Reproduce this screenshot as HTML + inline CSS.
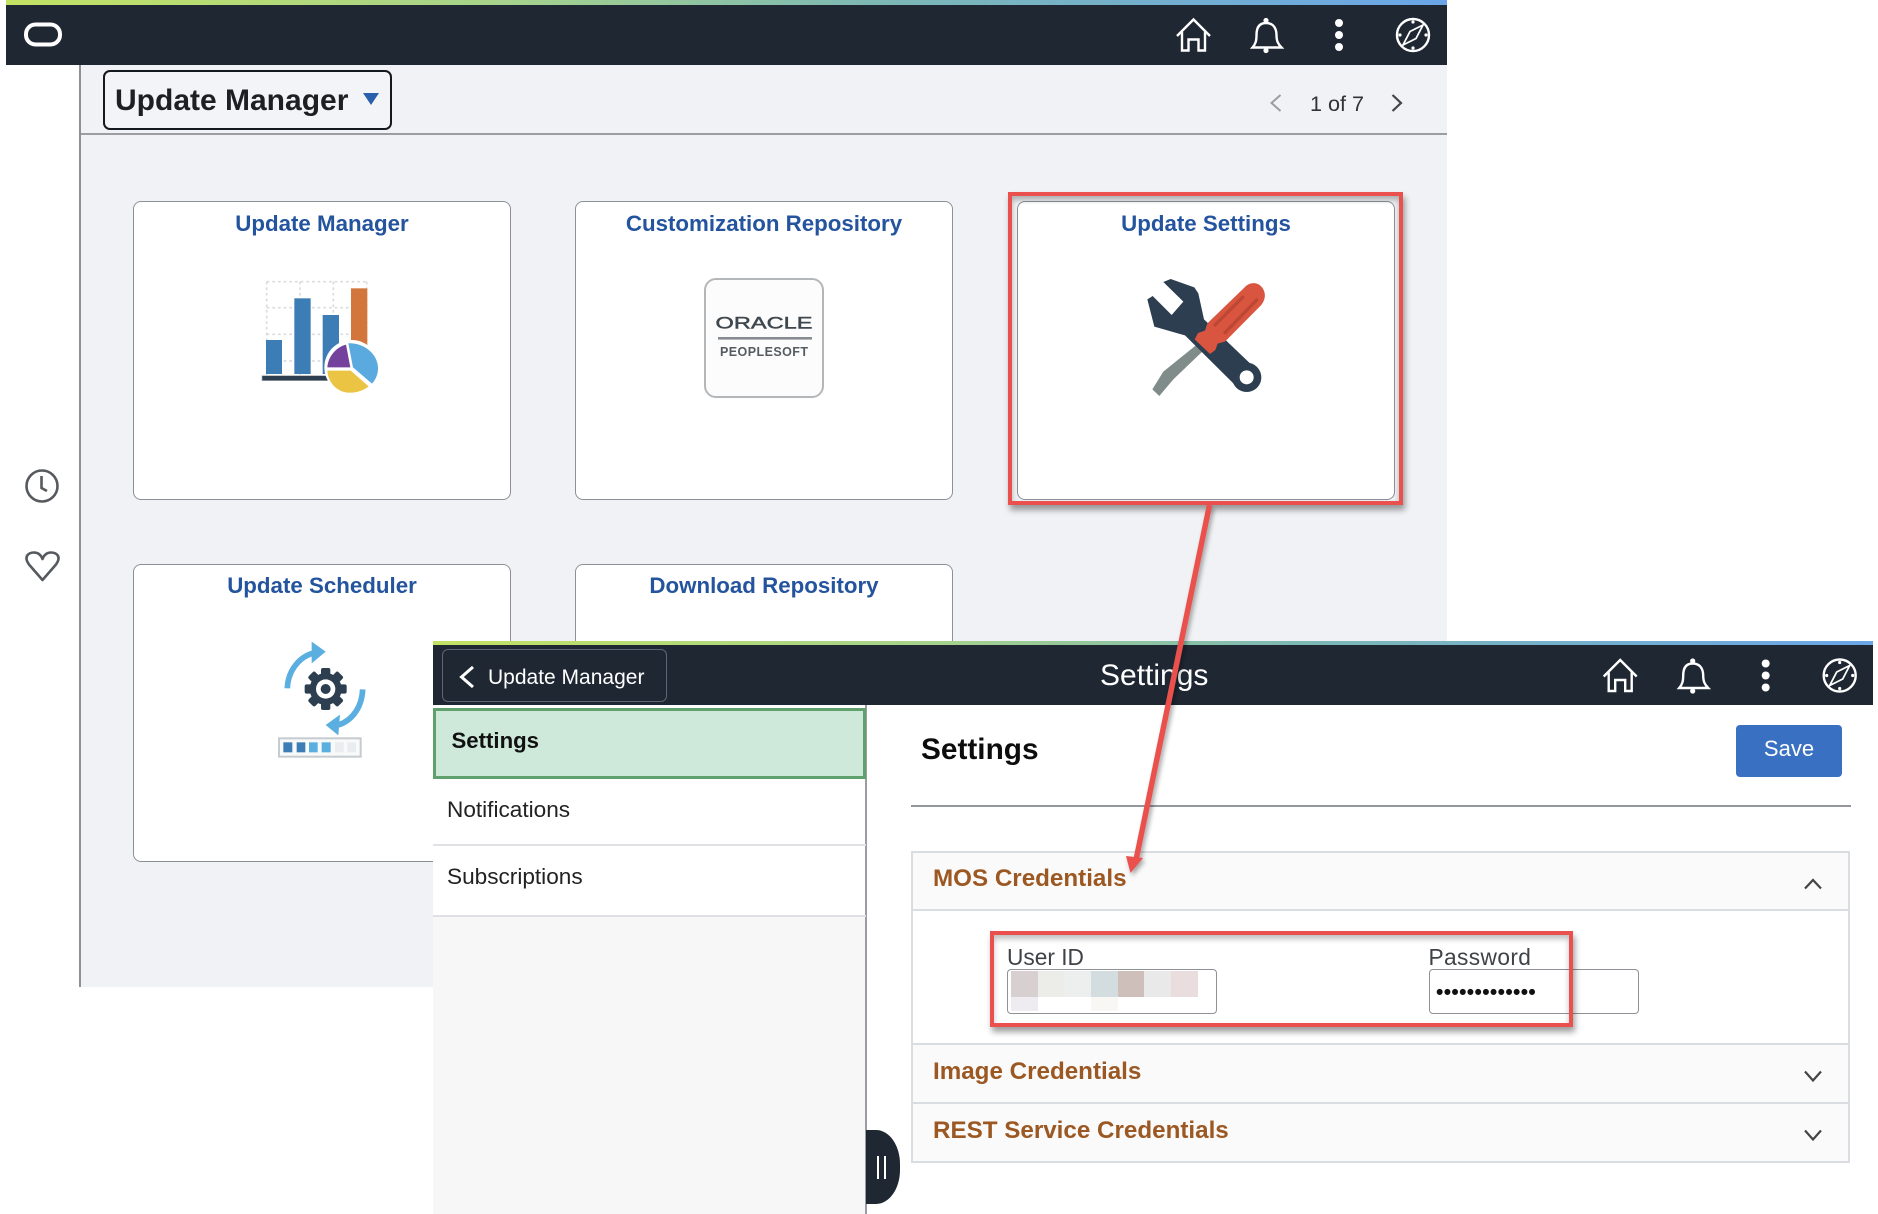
<!DOCTYPE html>
<html lang="en">
<head>
<meta charset="utf-8">
<title>Update Manager</title>
<style>
html,body{margin:0;padding:0;background:#fff;}
body{position:relative;width:1878px;height:1214px;overflow:hidden;font-family:"Liberation Sans",Arial,sans-serif;color:#222;}
div,span{box-sizing:border-box;}
.a{position:absolute;}
.t{position:absolute;white-space:nowrap;line-height:40px;height:40px;}
.bar{position:absolute;background:#1f2733;}
.stripe{position:absolute;background:linear-gradient(90deg,#c3e264 0%,#a5d28c 35%,#7db8b4 60%,#6aa6e8 100%);}
.tile{position:absolute;background:#fff;border:1.5px solid #8b9097;border-radius:8px;width:378px;height:299px;}
.tt{position:absolute;white-space:nowrap;line-height:40px;height:40px;font-weight:bold;font-size:22.3px;color:#24549e;text-align:center;width:378px;}
.rb{position:absolute;border:4.5px solid #ea514e;box-shadow:2px 5px 6px rgba(0,0,0,.38),inset 0 4px 6px rgba(0,0,0,.28);}
.acc{position:absolute;left:911px;width:939px;background:#fafafa;border:2px solid #d9dce0;}
.at{position:absolute;left:933px;white-space:nowrap;line-height:40px;height:40px;font-weight:bold;font-size:24.2px;color:#9c5822;}
svg{position:absolute;left:0;top:0;overflow:visible;}
</style>
</head>
<body>

<!-- back window -->
<div class="a" style="left:79px;top:65px;width:1367.5px;height:922px;background:#f0f2f5;border-left:2px solid #8d9196;"></div>
<div class="stripe" style="left:6px;top:0;width:1440.5px;height:5px;"></div>
<div class="bar" style="left:6px;top:5px;width:1440.5px;height:60px;"></div>
<div class="a" style="left:81px;top:133px;width:1365.5px;height:2px;background:#9a9ea3;"></div>

<div class="a" style="left:103px;top:70px;width:289px;height:60px;border:2px solid #14181f;border-radius:7px;background:#f3f4f7;"></div>
<div class="t" style="left:115px;top:81px;font-size:30px;font-weight:bold;color:#1c1f24;">Update Manager</div>
<div class="t" style="left:1310px;top:84px;font-size:21.6px;color:#333;">1 of 7</div>

<div class="tile" style="left:133px;top:201px;"></div>
<div class="tt" style="left:133px;top:204px;">Update Manager</div>
<div class="tile" style="left:575px;top:201px;"></div>
<div class="tt" style="left:575px;top:204px;">Customization Repository</div>
<div class="tile" style="left:1017px;top:201px;"></div>
<div class="tt" style="left:1017px;top:204px;">Update Settings</div>
<div class="tile" style="left:133px;top:563.5px;height:298px;"></div>
<div class="tt" style="left:133px;top:566px;">Update Scheduler</div>
<div class="tile" style="left:575px;top:563.5px;height:298px;"></div>
<div class="tt" style="left:575px;top:566px;">Download Repository</div>

<div class="rb" style="left:1008px;top:192px;width:395px;height:313px;"></div>

<svg width="1878" height="1214" viewBox="0 0 1878 1214" xmlns="http://www.w3.org/2000/svg">
  <defs>
    <g id="hdr" fill="none" stroke="#fff" stroke-width="2.4">
      <path d="M1177 36 L1193.5 19.5 L1210 36 M1182 32 V50.5 H1188.5 V39.5 H1198.5 V50.500 H1205 V32" stroke-linejoin="miter"/>
      <path d="M1266 23 C1259 23 1256.5 28 1256.5 35 C1256.5 41 1255.5 44 1252.5 47.500 H1281.5 C1278 44 1276.5 41 1276.5 35 C1276.5 28 1273 23 1266 23 Z"/>
      <circle cx="1266" cy="20.5" r="2.6" fill="#fff" stroke="none"/>
      <circle cx="1266" cy="50.5" r="2.6" fill="#fff" stroke="none"/>
      <circle cx="1339" cy="23" r="4" fill="#fff" stroke="none"/>
      <circle cx="1339" cy="35" r="4" fill="#fff" stroke="none"/>
      <circle cx="1339" cy="47" r="4" fill="#fff" stroke="none"/>
      <circle cx="1413" cy="35" r="16"/>
      <path d="M1423 25 L1416 38.500 L1403 45 L1410 31.500 Z" stroke-width="1.8"/>
      <circle cx="1413" cy="22" r="1.6" fill="#fff" stroke="none"/>
      <circle cx="1413" cy="48" r="1.6" fill="#fff" stroke="none"/>
      <circle cx="1400" cy="35" r="1.6" fill="#fff" stroke="none"/>
      <circle cx="1426" cy="35" r="1.6" fill="#fff" stroke="none"/>
    </g>
    <filter id="sh" x="-30%" y="-10%" width="160%" height="120%">
      <feDropShadow dx="2" dy="3" stdDeviation="2.5" flood-color="#000" flood-opacity=".35"/>
    </filter>
  </defs>

  <!-- logo -->
  <rect x="26" y="24.5" width="34" height="20" rx="9.5" fill="none" stroke="#fff" stroke-width="4"/>
  <use href="#hdr"/>

  <!-- left rail -->
  <circle cx="42" cy="486" r="15.5" fill="none" stroke="#565a5e" stroke-width="2.6"/>
  <path d="M41.5 476 V488 L47 491" fill="none" stroke="#565a5e" stroke-width="2.6"/>
  <path d="M42.5 580 L29 564.5 C23 556 29 552.5 34 552.5 C38 552.5 41 555 42.5 559 C44 555 47 552.5 51 552.5 C56 552.5 62 556 56 564.5 Z" fill="none" stroke="#565a5e" stroke-width="2.6" stroke-linejoin="round"/>

  <!-- dropdown triangle -->
  <path d="M363 93 H379 L371 105 Z" fill="#2a5fac"/>
  <!-- pager -->
  <path d="M1280.5 95 L1271.5 103 L1280.5 111" fill="none" stroke="#9a9ea3" stroke-width="2"/>
  <path d="M1392.5 95 L1401 103 L1392.5 111" fill="none" stroke="#444" stroke-width="2.2"/>

  <!-- chart icon -->
  <g transform="translate(250 260) scale(.33333)">
    <g stroke="#d9dcde" stroke-width="5" stroke-dasharray="8 9" fill="none">
      <path d="M50 65 V345 M150 65 V345 M250 65 V345 M350 65 V250 M50 65 H352 M50 143 H352 M50 223 H352 M50 303 H230"/>
    </g>
    <rect x="48" y="240" width="48" height="102" fill="#3d7db5"/>
    <rect x="133" y="115" width="49" height="227" fill="#3d7db5"/>
    <rect x="218" y="165" width="49" height="177" fill="#3d7db5"/>
    <rect x="303" y="85" width="49" height="175" fill="#d2763c"/>
    <rect x="36" y="347" width="200" height="15" fill="#2c3e50" stroke="#a9aeb3" stroke-width="2"/>
    <circle cx="305" cy="322" r="82" fill="#fff"/>
    <path d="M301 322 H232 C234 290 258 262 288 254 Z" fill="#74429c"/>
    <path d="M295 250 C340 248 382 280 384 322 C385 340 378 358 366 371 L309 322 Z" fill="#5aaae0"/>
    <path d="M232 332 H302 L356 379 C340 392 320 398 298 398 C262 398 234 368 232 332 Z" fill="#ecc443"/>
  </g>

  <!-- oracle icon -->
  <rect x="705" y="279" width="118" height="118" rx="11" fill="#fcfcfc" stroke="#b4b7ba" stroke-width="2"/>
  <text x="715.500" y="328.500" font-family="Liberation Sans, sans-serif" font-size="17" textLength="97" lengthAdjust="spacingAndGlyphs" fill="#3f474e" stroke="#3f474e" stroke-width=".45">ORACLE</text>
  <rect x="718" y="337" width="94" height="2.600" fill="#868c92"/>
  <text x="720" y="356" font-family="Liberation Sans, sans-serif" font-size="12.500" font-weight="bold" textLength="88" lengthAdjust="spacing" fill="#565b60">PEOPLESOFT</text>

  <!-- tools icon -->
  <g transform="translate(1130 260) scale(.33333)">
    <path d="M88 408 L67 388 L100 335 L205 250 L222 270 L130 358 Z" fill="#7f8c8a"/>
    <path d="M100 66 L122 57 L193 82 L205 100 L222 178 L362 312 L312 372 L165 226 L150 222 L73 200 L52 118 L68 108 L125 165 L160 125 Z" fill="#2c3e50"/>
    <circle cx="350" cy="352" r="44" fill="#2c3e50"/>
    <circle cx="350" cy="352" r="21" fill="#fff"/>
    <path d="M350 76 C372 62 392 72 400 88 C410 108 402 125 392 137 L285 245 L263 251 L256 270 L240 282 L194 238 L204 219 L225 212 L232 190 Z" fill="#d9553f"/>
    <path d="M338 112 L255 195 M380 120 L285 218" stroke="#bd4733" stroke-width="10" stroke-linecap="round" fill="none"/>
  </g>

  <!-- scheduler icon -->
  <g transform="translate(260 630) scale(.33333)">
    <path d="M82 175 C84 120 120 78 165 68" fill="none" stroke="#5aaee0" stroke-width="17"/>
    <path d="M155 35 L197 65 L155 100 Z" fill="#5aaee0"/>
    <path d="M308 178 C306 228 280 270 235 285" fill="none" stroke="#5aaee0" stroke-width="17"/>
    <path d="M240 254 L197 285 L235 316 Z" fill="#5aaee0"/>
    <g fill="#2c3e50">
      <rect x="183" y="114" width="28" height="126" rx="6"/>
      <rect x="183" y="114" width="28" height="126" rx="6" transform="rotate(45 197 177)"/>
      <rect x="183" y="114" width="28" height="126" rx="6" transform="rotate(90 197 177)"/>
      <rect x="183" y="114" width="28" height="126" rx="6" transform="rotate(135 197 177)"/>
      <circle cx="197" cy="177" r="48"/>
    </g>
    <circle cx="197" cy="177" r="29" fill="#fff"/>
    <circle cx="197" cy="177" r="15" fill="#2c3e50"/>
    <rect x="57" y="325" width="245" height="55" fill="#f8f9f9" stroke="#c6cbcf" stroke-width="6"/>
    <rect x="70" y="337" width="27" height="30" fill="#3d7db5"/>
    <rect x="110" y="337" width="26" height="30" fill="#3d7db5"/>
    <rect x="147" y="337" width="26" height="30" fill="#5aaee0"/>
    <rect x="185" y="337" width="27" height="30" fill="#5aaee0"/>
    <rect x="225" y="337" width="26" height="30" fill="#e9edef"/>
    <rect x="262" y="337" width="26" height="30" fill="#e9edef"/>
  </g>
</svg>

<!-- front window -->
<div class="a" style="left:433px;top:645px;width:1440px;height:569px;background:#fff;"></div>
<div class="stripe" style="left:433px;top:641px;width:1440px;height:5px;"></div>
<div class="bar" style="left:433px;top:645px;width:1440px;height:60px;"></div>
<div class="a" style="left:442px;top:649px;width:225px;height:53px;border:1.5px solid #5d6672;border-radius:6px;background:#1f2733;"></div>
<div class="t" style="left:488px;top:658px;font-size:21px;color:#fff;">Update Manager</div>
<div class="t" style="left:1100px;top:656px;font-size:30px;color:#fff;">Settings</div>

<!-- side nav -->
<div class="a" style="left:433px;top:705px;width:434px;height:509px;background:#fff;border-right:2px solid #9a9ea3;"></div>
<div class="a" style="left:433px;top:916px;width:432px;height:298px;background:#f7f7f7;"></div>
<div class="a" style="left:433px;top:708px;width:433px;height:71px;background:#cee9d9;border:3px solid #5fa06c;"></div>
<div class="t" style="left:451.500px;top:721px;font-size:22.2px;font-weight:bold;color:#111;">Settings</div>
<div class="t" style="left:447px;top:790px;font-size:22.6px;color:#222;">Notifications</div>
<div class="a" style="left:433px;top:843.500px;width:433px;height:2px;background:#dfe1e4;"></div>
<div class="t" style="left:447px;top:857px;font-size:22.6px;color:#222;">Subscriptions</div>
<div class="a" style="left:433px;top:915px;width:433px;height:2px;background:#dfe1e4;"></div>
<div class="a" style="left:866px;top:1130px;width:34px;height:74px;background:#1f2733;border-radius:0 24px 24px 0 / 0 34px 34px 0;"></div>
<div class="a" style="left:877px;top:1156px;width:2px;height:23px;background:#fff;"></div>
<div class="a" style="left:884px;top:1156px;width:2px;height:23px;background:#fff;"></div>

<!-- content -->
<div class="t" style="left:921px;top:730px;font-size:29.800px;font-weight:bold;color:#0d0d0d;">Settings</div>
<div class="a" style="left:1736px;top:725px;width:106px;height:52px;background:#3a70c2;border-radius:4px;"></div>
<div class="t" style="left:1736px;top:729px;width:106px;text-align:center;font-size:22px;color:#fff;">Save</div>
<div class="a" style="left:911px;top:805px;width:940px;height:2px;background:#94989d;"></div>

<div class="acc" style="top:851px;height:60px;"></div>
<div class="a" style="left:911px;top:909px;width:939px;height:136px;border:2px solid #d9dce0;background:#fff;"></div>
<div class="acc" style="top:1043px;height:61px;"></div>
<div class="acc" style="top:1102px;height:61px;"></div>
<div class="at" style="top:859px;">MOS Credentials</div>
<div class="at" style="top:1052px;">Image Credentials</div>
<div class="at" style="top:1110.500px;">REST Service Credentials</div>

<div class="t" style="left:1007px;top:937px;font-size:22.700px;color:#3f4347;">User ID</div>
<div class="t" style="left:1428.500px;top:937px;font-size:22.700px;color:#3f4347;letter-spacing:.4px;">Password</div>
<div class="a" style="left:1007px;top:969px;width:210px;height:45px;border:1.5px solid #8e9297;border-radius:4px;background:#fff;"></div>
<div class="a" style="left:1428.500px;top:969px;width:210px;height:45px;border:1.5px solid #8e9297;border-radius:4px;background:#fff;"></div>
<div class="a" style="left:1011px;top:971px;width:27px;height:26px;background:#d8cfd1;"></div>
<div class="a" style="left:1038px;top:971px;width:26px;height:26px;background:#ecede8;"></div>
<div class="a" style="left:1064px;top:971px;width:27px;height:26px;background:#ecefee;"></div>
<div class="a" style="left:1091px;top:971px;width:27px;height:26px;background:#d3dcde;"></div>
<div class="a" style="left:1118px;top:971px;width:26px;height:26px;background:#cfbfba;"></div>
<div class="a" style="left:1144px;top:971px;width:27px;height:26px;background:#e9e9e9;"></div>
<div class="a" style="left:1171px;top:971px;width:27px;height:26px;background:#e9dedd;"></div>
<div class="a" style="left:1011px;top:997px;width:27px;height:14px;background:#eeecf1;"></div>
<div class="a" style="left:1091px;top:997px;width:27px;height:14px;background:#f9f7f3;"></div>
<div class="t" style="left:1436px;top:973px;font-size:21px;font-weight:bold;letter-spacing:.35px;color:#111;">•••••••••••••</div>

<div class="rb" style="left:990px;top:931px;width:582.500px;height:96px;box-shadow:2px 5px 6px rgba(0,0,0,.38),inset 0 4px 6px rgba(0,0,0,.25);"></div>

<svg width="1878" height="1214" viewBox="0 0 1878 1214" xmlns="http://www.w3.org/2000/svg">
  <use href="#hdr" transform="translate(426.7 640.5)"/>
  <path d="M473 667 L461.500 677 L473 687" fill="none" stroke="#fff" stroke-width="3"/>
  <path d="M1805 888.500 L1813 880 L1821 888.500" fill="none" stroke="#444" stroke-width="2.200"/>
  <path d="M1805 1071.500 L1813 1080.500 L1821 1071.500" fill="none" stroke="#444" stroke-width="2.200"/>
  <path d="M1805 1130.500 L1813 1139.500 L1821 1130.500" fill="none" stroke="#444" stroke-width="2.200"/>
  <g filter="url(#sh)">
    <path d="M1209.500 505 L1136 860" stroke="#ea514e" stroke-width="5.500" fill="none"/>
    <path d="M1126 856 L1143 858 L1130.500 873 Z" fill="#ea514e"/>
  </g>
</svg>
</body>
</html>
